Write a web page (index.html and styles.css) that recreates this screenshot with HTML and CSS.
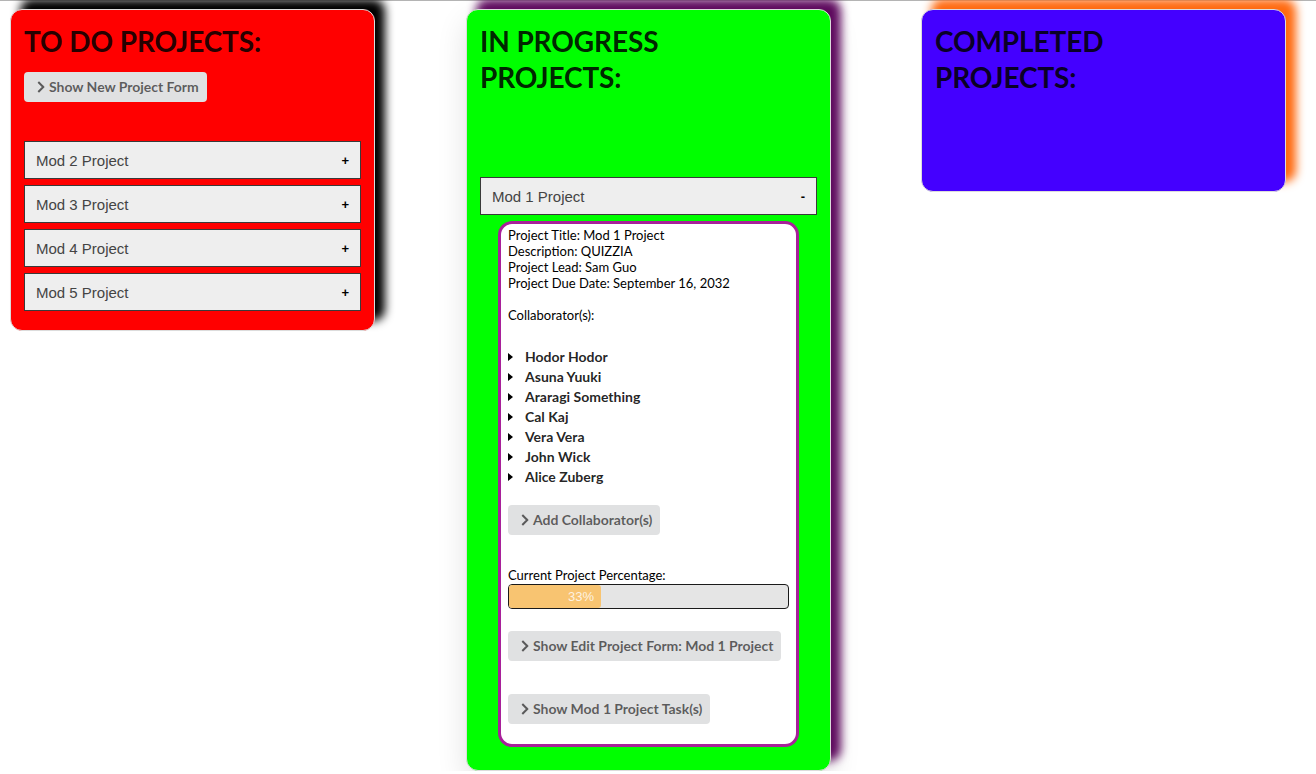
FILE: index.html
```html
<!DOCTYPE html>
<html lang="en">
<head>
<meta charset="utf-8">
<title>Projects Board</title>
<link rel="stylesheet" href="styles.css">
</head>
<body>
<div class="board">
  <section class="column column--todo">
    <h2 class="column__title">TO DO PROJECTS:</h2>
    <div class="column__toolbar">
      <button class="ui-btn"><span class="ui-btn__chev"></span>Show New Project Form</button>
    </div>
    <div class="column__list">
      <div class="accordion"><span class="accordion__label">Mod 2 Project</span><span class="accordion__sign">+</span></div>
      <div class="accordion"><span class="accordion__label">Mod 3 Project</span><span class="accordion__sign">+</span></div>
      <div class="accordion"><span class="accordion__label">Mod 4 Project</span><span class="accordion__sign">+</span></div>
      <div class="accordion"><span class="accordion__label">Mod 5 Project</span><span class="accordion__sign">+</span></div>
    </div>
  </section>

  <section class="column column--progress">
    <h2 class="column__title">IN PROGRESS PROJECTS:</h2>
    <div class="column__toolbar"></div>
    <div class="column__list">
      <div class="accordion accordion--open"><span class="accordion__label">Mod 1 Project</span><span class="accordion__sign">-</span></div>
      <div class="panel">
        <div class="panel__info">
          <div>Project Title: Mod 1 Project</div>
          <div>Description: QUIZZIA</div>
          <div>Project Lead: Sam Guo</div>
          <div>Project Due Date: September 16, 2032</div>
        </div>
        <div class="panel__label">Collaborator(s):</div>
        <ul class="collab">
          <li class="collab__item">Hodor Hodor</li>
          <li class="collab__item">Asuna Yuuki</li>
          <li class="collab__item">Araragi Something</li>
          <li class="collab__item">Cal Kaj</li>
          <li class="collab__item">Vera Vera</li>
          <li class="collab__item">John Wick</li>
          <li class="collab__item">Alice Zuberg</li>
        </ul>
        <button class="ui-btn panel__btn-add"><span class="ui-btn__chev"></span>Add Collaborator(s)</button>
        <div class="panel__progress-label">Current Project Percentage:</div>
        <div class="progress">
          <div class="progress__bar" style="width: 33%"><span class="progress__text">33%</span></div>
        </div>
        <button class="ui-btn panel__btn-edit"><span class="ui-btn__chev"></span>Show Edit Project Form: Mod 1 Project</button>
        <button class="ui-btn panel__btn-tasks"><span class="ui-btn__chev"></span>Show Mod 1 Project Task(s)</button>
      </div>
    </div>
  </section>

  <section class="column column--done">
    <h2 class="column__title">COMPLETED PROJECTS:</h2>
    <div class="column__toolbar"></div>
    <div class="column__list column__list--empty"></div>
  </section>
</div>
</body>
</html>
```

FILE: styles.css
```css
html, body {
  margin: 0;
  padding: 0;
  background: #ffffff;
}

body {
  font-family: Lato, "Open Sans", sans-serif;
  overflow: hidden;
}

.board {
  border-top: 1px solid #b4b4b4;
  padding: 8px 0 0 10px;
  display: flex;
  align-items: flex-start;
  gap: 91px;
}

.column {
  width: 365px;
  box-sizing: border-box;
  border: 1px solid #dcdcdc;
  border-radius: 12px;
  padding: 13px 13px 19px 13px;
}

.column--todo {
  background: #ff0000;
  box-shadow: 10px -10px 10px #000000;
}

.column--progress {
  background: #00ff00;
  box-shadow: 10px -10px 10px #5e0a5e, 0 12px 30px rgba(0, 0, 0, 0.12);
}

.column--done {
  background: #4400ff;
  box-shadow: 10px -10px 10px #ff6a10;
  margin-left: -1px;
}

.column__title {
  margin: 0;
  max-width: 250px;
  font-family: Lato, sans-serif;
  font-weight: 700;
  font-size: 28px;
  line-height: 36px;
  color: rgba(0, 0, 0, 0.87);
  letter-spacing: -0.1px;
}

.column__toolbar {
  margin-top: 13px;
  height: 30px;
}

.column__list {
  margin-top: 39px;
  display: flex;
  flex-direction: column;
  gap: 6px;
}

.column__list--empty {
  margin-top: 34px;
}

.ui-btn {
  display: inline-flex;
  align-items: center;
  height: 30px;
  box-sizing: border-box;
  padding: 0 8px 0 12px;
  border: none;
  border-radius: 4px;
  background: #e0e1e2;
  color: rgba(0, 0, 0, 0.6);
  font-family: Lato, sans-serif;
  font-weight: 700;
  font-size: 14px;
  line-height: 16px;
  letter-spacing: -0.03px;
  cursor: pointer;
}

.ui-btn__chev {
  width: 6px;
  height: 6px;
  border-right: 2px solid rgba(0, 0, 0, 0.6);
  border-top: 2px solid rgba(0, 0, 0, 0.6);
  transform: rotate(45deg);
  margin-right: 6px;
  margin-left: -1px;
}

.accordion {
  height: 38px;
  box-sizing: border-box;
  border: 1px solid #3a3a3a;
  background: #eeeeee;
  display: flex;
  align-items: center;
  justify-content: space-between;
  padding: 0 11px 0 11px;
  font-family: "Liberation Sans", Arial, sans-serif;
  font-size: 15px;
  color: #444444;
}

.accordion__sign {
  font-family: "Liberation Sans", Arial, sans-serif;
  font-weight: 700;
  font-size: 13px;
  color: #000000;
}

.panel {
  margin: 0 18px 4px 18px;
  background: #ffffff;
  border: 3px solid #a8209a;
  border-radius: 14px;
  padding: 3px 7px 20px 7px;
  font-family: Lato, sans-serif;
  font-size: 13px;
  line-height: 16px;
  color: #000000;
  display: flex;
  flex-direction: column;
  align-items: flex-start;
}

.panel__info {
  margin-bottom: 16px;
}

.collab {
  list-style: none;
  margin: 24px 0 0 0;
  padding: 0;
}

.collab__item {
  position: relative;
  padding-left: 17px;
  font-weight: 700;
  font-size: 14px;
  line-height: 20px;
  color: rgba(0, 0, 0, 0.87);
}

.collab__item::before {
  content: "";
  position: absolute;
  left: 0;
  top: 6px;
  border-left: 5px solid #000000;
  border-top: 4px solid transparent;
  border-bottom: 4px solid transparent;
}

.panel__btn-add {
  margin-top: 18px;
}

.panel__progress-label {
  margin-top: 32px;
}

.progress {
  align-self: stretch;
  margin-top: 1px;
  height: 25px;
  box-sizing: border-box;
  border: 1px solid #1a1a1a;
  border-radius: 4px;
  background: #e5e5e5;
  display: flex;
}

.progress__bar {
  background: #f8c471;
  border-radius: 3px;
  display: flex;
  align-items: center;
  justify-content: flex-end;
  padding-right: 7px;
  box-sizing: border-box;
}

.progress__text {
  font-family: "Liberation Sans", Arial, sans-serif;
  font-size: 13px;
  color: rgba(255, 255, 255, 0.8);
}

.panel__btn-edit {
  margin-top: 22px;
}

.panel__btn-tasks {
  margin-top: 33px;
}
```
